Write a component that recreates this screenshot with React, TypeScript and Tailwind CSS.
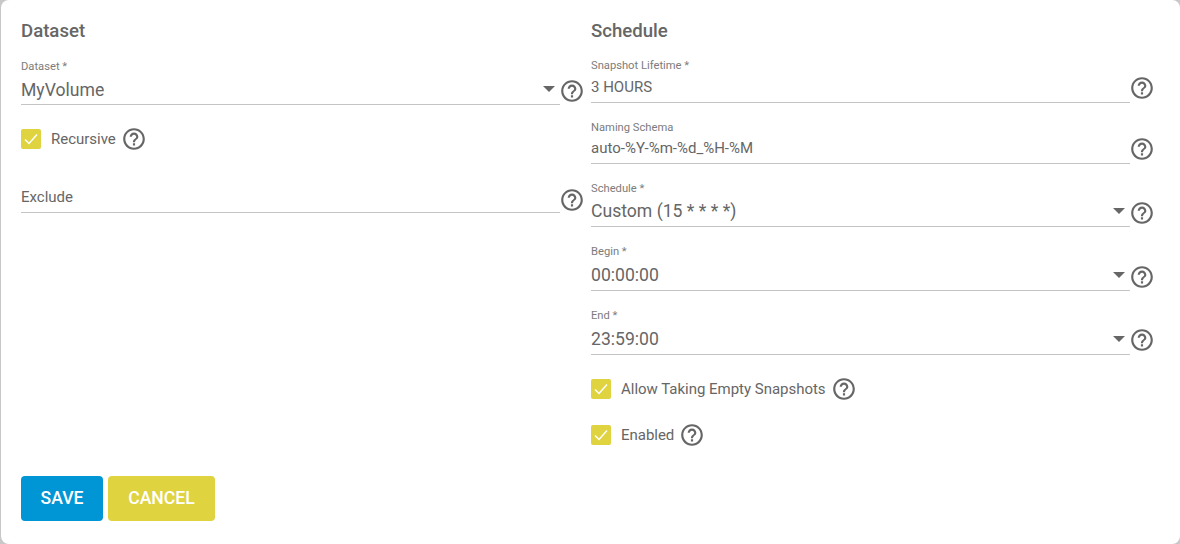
import React from 'react';

function HelpIcon() {
  return (
    <svg className="w-[26px] h-[26px] shrink-0 text-[#666666]" viewBox="0 0 24 24" fill="currentColor">
      <path d="M11 18h2v-2h-2v2zm1-16C6.48 2 2 6.48 2 12s4.48 10 10 10 10-4.48 10-10S17.52 2 12 2zm0 18c-4.41 0-8-3.59-8-8s3.59-8 8-8 8 3.59 8 8-3.59 8-8 8zm0-14c-2.21 0-4 1.79-4 4h2c0-1.1.9-2 2-2s2 .9 2 2c0 2-3 1.75-3 5h2c0-2.25 3-2.5 3-5 0-2.21-1.79-4-4-4z" />
    </svg>
  );
}

function Field({ label, value, select, big, className, labelClass, valueClass, iconClass }: { label?: string; value: string; select?: boolean; big?: boolean; className?: string; labelClass?: string; valueClass?: string; iconClass?: string }) {
  return (
    <div className={`flex items-end ${className ?? ''}`}>
      <div className="w-[539px] border-b border-[#c4c4c4]">
        {label && <div className={`text-[11.2px] leading-[14px] text-[#7c7c7c] ${labelClass ?? ''}`}>{label}</div>}
        <div className={`flex items-center justify-between ${big ? 'h-[30px] text-[17.6px]' : 'h-[30px] text-[15px]'} leading-[30px] text-[#666666]`}>
          <span className={valueClass}>{value}</span>
          {select && <span className="w-0 h-0 mr-[5px] border-x-[6px] border-x-transparent border-t-[6px] border-t-[#666666]" />}
        </div>
      </div>
      <div className={`w-[26px] -ml-[1px] ${iconClass ?? 'mb-[1px]'}`}><HelpIcon /></div>
    </div>
  );
}

function Check({ label, className }: { label: string; className?: string }) {
  return (
    <div className={`flex items-center h-[26px] ${className ?? ''}`}>
      <div className="w-5 h-5 rounded-[2px] bg-[#dfd33f] flex items-center justify-center">
        <svg className="w-4 h-4" viewBox="0 0 16 16" fill="none" stroke="#fff" strokeWidth="1.5">
          <path d="M2 8.5l4 4L14 3.5" />
        </svg>
      </div>
      <span className="ml-[10px] mr-[5px] text-[15px] tracking-[-0.02px] text-[#666666]">{label}</span>
      <HelpIcon />
    </div>
  );
}

export default function App() {
  return (
    <div className="w-[1180px] h-[544px] bg-[#c8c8c8] font-['Roboto',sans-serif]">
      <div className="w-[1179px] h-[544px] ml-[1px] bg-white rounded-[8px] pl-[20px] pt-[19px] flex flex-col">
        <div className="flex h-[457px]">
          <div className="w-[570px]">
            <h2 className="text-[18.6px] leading-[24px] font-medium text-[#666666]">Dataset</h2>
            <Field className="mt-[17px]" label="Dataset *" value="MyVolume" valueClass="translate-y-[1px]" select big />
            <Check className="mt-[21px]" label="Recursive" />
            <Field className="mt-[30px]" value="Exclude" iconClass="mb-[0px]" />
          </div>
          <div>
            <h2 className="text-[18.6px] leading-[24px] font-medium text-[#666666]">Schedule</h2>
            <Field className="mt-[15px]" label="Snapshot Lifetime *" labelClass="translate-y-[1px]" value="3 HOURS" iconClass="mb-[2px]" />
            <Field className="mt-[16px]" label="Naming Schema" labelClass="translate-y-[2px]" value="auto-%Y-%m-%d_%H-%M" iconClass="mb-[2px]" />
            <Field className="mt-[18px]" label="Schedule *" value="Custom (15 * * * *)" select big />
            <Field className="mt-[19px]" label="Begin *" labelClass="-translate-y-[1px]" value="00:00:00" select big />
            <Field className="mt-[19px]" label="End *" labelClass="-translate-y-[1px]" value="23:59:00" select big iconClass="mb-[2px]" />
            <Check className="mt-[21px]" label="Allow Taking Empty Snapshots" />
            <Check className="mt-[20px]" label="Enabled" />
          </div>
        </div>
        <div className="flex gap-[5px]">
          <button className="w-[82px] h-[45px] rounded-[4px] bg-[#0095d5] text-white text-[17.6px] font-medium">SAVE</button>
          <button className="w-[107px] h-[45px] rounded-[4px] bg-[#dfd33f] text-white text-[17.6px] font-medium">CANCEL</button>
        </div>
      </div>
    </div>
  );
}
